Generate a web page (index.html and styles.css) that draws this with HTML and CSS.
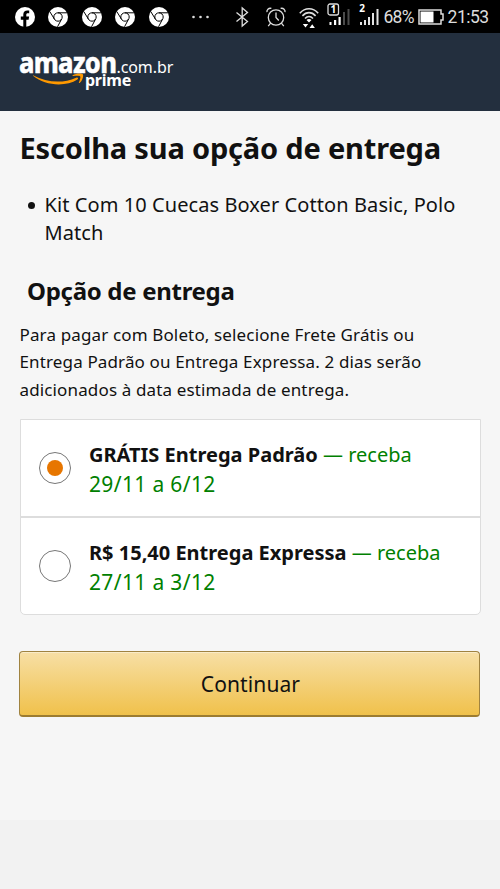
FILE: index.html
```html
<!DOCTYPE html>
<html lang="pt-BR">
<head>
<meta charset="utf-8">
<title>Escolha sua opção de entrega</title>
<link rel="stylesheet" href="styles.css">
</head>
<body>
<svg class="defs" aria-hidden="true">
  <symbol id="chrome" viewBox="0 0 20 20">
    <circle cx="10" cy="10" r="10" fill="#fff"/>
    <g fill="none" stroke="#000" stroke-width="1">
      <circle cx="10" cy="10" r="4.2"/>
      <path d="M10 5.8H19M6.4 12.1L1.8 4.6M13.6 12.1L9.5 19.8"/>
    </g>
  </symbol>
</svg>
<div class="status">
  <div class="notifications">
    <svg width="20" height="20" viewBox="0 0 20 20"><circle cx="10" cy="10" r="10" fill="#fff"/><path d="M8.3 20v-7.3H5.8V9.6h2.5V7.5c0-2.7 1.6-4.1 4-4.1.9 0 1.9.2 1.9.2v2.6h-1.4c-1.2 0-1.5.7-1.5 1.5v1.9h2.8l-.5 3.1h-2.3V20z" fill="#000"/></svg>
    <svg width="20" height="20"><use href="#chrome"/></svg>
    <svg width="20" height="20"><use href="#chrome"/></svg>
    <svg width="20" height="20"><use href="#chrome"/></svg>
    <svg width="20" height="20"><use href="#chrome"/></svg>
  </div>
  <svg class="more" width="17" height="20" viewBox="0 0 17 20" fill="#ddd"><circle cx="1.5" cy="10" r="1.3"/><circle cx="8.5" cy="10" r="1.3"/><circle cx="15.5" cy="10" r="1.3"/></svg>
  <svg class="bluetooth" width="14" height="20" viewBox="0 0 14 20" fill="none" stroke="#ddd" stroke-width="1.3"><path d="M1.5 5.5l11 9L7.2 19V1l5.3 4.5-11 9"/></svg>
  <svg class="alarm" width="20" height="20" viewBox="0 0 20 20" fill="none" stroke="#ddd" stroke-width="1.3"><circle cx="10" cy="10.5" r="7.7"/><path d="M10 5.5v5l2.8 3M1 5.2C.5 3 2.5.7 5.4 1.4M19 5.2c.5-2.2-1.5-4.5-4.4-3.8M4.6 16.2l-2.4 2.9M15.4 16.2l2.4 2.9"/></svg>
  <svg class="wifi" width="20" height="22" viewBox="0 0 20 22" fill="none" stroke="#ddd" stroke-width="1.6"><path d="M.8 6.2C6 .3 14 .3 19.2 6.2M3.4 8.9c4-4.3 9.2-4.3 13.2 0M6 11.5c2.5-2.6 5.5-2.6 8 0"/><path d="M7.5 13c1.5-1.4 3.5-1.4 5 0L10 15.6zM3.8 17h5.4L6.5 20.6zM10.5 21h5.4l-2.7-3.8z" fill="#fff" stroke="none"/></svg>
  <svg class="signal-one" width="24" height="24" viewBox="0 0 24 24"><rect x="1" y="1" width="10.5" height="11" rx="2" fill="none" stroke="#ddd" stroke-width="1.3"/><path d="M2.5 19h2v3h-2zM7 17h2.2v5H7zM11.5 14h2.2v8h-2.2z" fill="#fff"/><path d="M16 9h2v13h-2zM20.5 6h2v16h-2z" fill="#4b4b4b"/><text x="3.5" y="10.1" class="sim">1</text></svg>
  <svg class="signal-two" width="21" height="24" viewBox="0 0 21 24"><path d="M1 19h2v3H1zM5 17h2v5H5zM9 14h2v8H9zM13 10h2v12h-2zM17.5 6h2v16h-2z" fill="#e4e4e4"/><text x="0.3" y="9" class="sim">2</text></svg>
  <span class="percent">68%</span>
  <svg class="battery" width="26" height="16" viewBox="0 0 26 16"><path d="M1 1h22v4h2v6h-2v4H1z" fill="none" stroke="#ddd" stroke-width="1.5"/><path d="M2.5 2.5h13v11h-13z" fill="#fff"/></svg>
  <span class="clock">21:53</span>
</div>
<header class="header">
  <div class="logo">
    <div class="brand"><span class="amazon">amazon</span><span class="domain">.com.br</span></div>
    <div class="tagline">
      <svg width="52" height="15" viewBox="0 0 52 15"><path d="M0 2.2c14 7.7 30 8.4 43.2 2.5 1.8-.7 2.6.8 1.2 1.8C33 14 12 13 0 2.8z" fill="#f90"/><path d="M39.5 2.2C43 .1 48.8-.1 49.8 1.2c1 1.3-.2 6.4-3.2 8.7-.5.4-1 .1-.7-.5.8-1.8 2-5.1 1.2-6.1-.8-1-4.5-.6-6.9-.3-.7.1-1-.5-.7-.8z" fill="#f90"/></svg>
      <span class="prime">prime</span>
    </div>
  </div>
</header>
<main class="page">
  <h1>Escolha sua opção de entrega</h1>
  <ul class="items"><li><span>Kit Com 10 Cuecas Boxer Cotton Basic, Polo<br>Match</span></li></ul>
  <h2>Opção de entrega</h2>
  <p class="note">Para pagar com Boleto, selecione Frete Grátis ou<br>Entrega Padrão ou Entrega Expressa. 2 dias serão<br>adicionados à data estimada de entrega.</p>
  <div class="options">
    <label class="option"><span class="radio checked"></span><span class="label"><b>GRÁTIS Entrega Padrão</b> <span class="when">— receba</span><br><span class="date">29/11 a 6/12</span></span></label>
    <label class="option"><span class="radio"></span><span class="label"><b>R$ 15,40 Entrega Expressa</b> <span class="when">— receba</span><br><span class="date">27/11 a 3/12</span></span></label>
  </div>
  <button class="continue">Continuar</button>
</main>
<footer class="footer"></footer>
</body>
</html>
```
FILE: styles.css
```css
* { box-sizing: border-box; }
body {
  margin: 0;
  height: 889px;
  display: flex;
  flex-direction: column;
  overflow: hidden;
  background: #f6f6f6;
  color: #111;
  font-family: "Noto Sans", sans-serif;
}
.defs { display: none; }
.status {
  height: 33px;
  flex: none;
  display: flex;
  align-items: center;
  padding-left: 15px;
  background: #000;
  color: #ddd;
  font-family: Roboto, sans-serif;
}
.status svg { flex: none; overflow: visible; }
.notifications { display: flex; gap: 13.4px; }
.more { margin-left: 23px; }
.bluetooth { margin-left: 26px; }
.alarm { margin-left: 17px; }
.wifi { margin-left: 13px; margin-top: 3px; }
.signal-one { margin-left: 8px; margin-top: -4px; }
.signal-two { margin-left: 8px; margin-top: -4px; }
.percent { width: 34px; margin-left: 4px; font-size: 17.5px; letter-spacing: -.8px; }
.battery { margin-left: 0; }
.clock { margin-left: 4px; font-size: 17.5px; letter-spacing: -.5px; }
.sim { font: bold 10px "Noto Sans", sans-serif; fill: #fff; }
.header { height: 78px; flex: none; padding: 15px 0 0 19px; background: #232f3e; color: #fff; }
.brand { display: flex; align-items: baseline; height: 25px; line-height: 27px; white-space: nowrap; }
.amazon { width: 97.5px; font-size: 29px; font-weight: 800; transform: scaleX(.875); transform-origin: 0 0; letter-spacing: -.8px; -webkit-text-stroke: .4px #fff; }
.domain { font-size: 16px; letter-spacing: -.1px; }
.tagline { display: flex; height: 24px; margin-left: 14px; }
.prime { font-size: 16px; line-height: 15px; font-weight: 700; letter-spacing: -.25px; }
.page { flex: 1; padding: 0 20px; }
h1 { margin: 17px 0 0 -.5px; font-size: 29px; line-height: 40px; letter-spacing: -.18px; white-space: nowrap; }
.items { margin: 23px 0 0; padding-left: 8px; list-style: none; font-size: 20px; line-height: 28px; letter-spacing: .08px; white-space: nowrap; }
.items li { display: flex; gap: 9.5px; }
.items li::before { content: ""; width: 7px; height: 7px; margin-top: 11px; border-radius: 50%; background: #111; }
h2 { margin: 28px 0 0 7px; font-size: 24px; line-height: 32px; letter-spacing: -.3px; white-space: nowrap; }
.note { margin: 13.5px 0 0 -.5px; font-size: 17px; line-height: 27.5px; letter-spacing: .14px; white-space: nowrap; }
.options { margin: 16px -1px 0 -.5px; height: 196px; background: #fff; border: 1.5px solid #ddd; border-radius: 0 0 5px 5px; }
.option { height: 97px; display: flex; align-items: center; padding-left: 18px; }
.option:first-child { height: 96px; }
.option + .option { border-top: 2px solid #ddd; }
.radio { width: 32px; height: 32px; border: 1.5px solid #777; border-radius: 50%; display: grid; place-items: center; }
.checked::after { content: ""; width: 16px; height: 16px; border-radius: 50%; background: #e77600; }
.label { margin-left: 18.5px; margin-top: 4px; font-size: 20px; line-height: 30px; white-space: nowrap; }
.when, .date { color: #008000; }
.date { font-size: 21px; line-height: 20px; letter-spacing: .35px; }
.continue {
  display: block;
  width: 461px;
  height: 66px;
  margin: 36px 0 0 -1px;
  border: 1px solid #a08340;
  border-bottom: 2px solid #9c7c31;
  border-radius: 4px;
  background: linear-gradient(#f7dfa5, #f0c14b);
  box-shadow: inset 0 1px 0 rgba(255,255,255,.4);
  color: #111;
  font: 21px "Noto Sans", sans-serif;
  letter-spacing: .1px;
  padding: 1px 0 0 2px;
}
.footer { height: 69px; flex: none; background: #f2f2f2; }
```
